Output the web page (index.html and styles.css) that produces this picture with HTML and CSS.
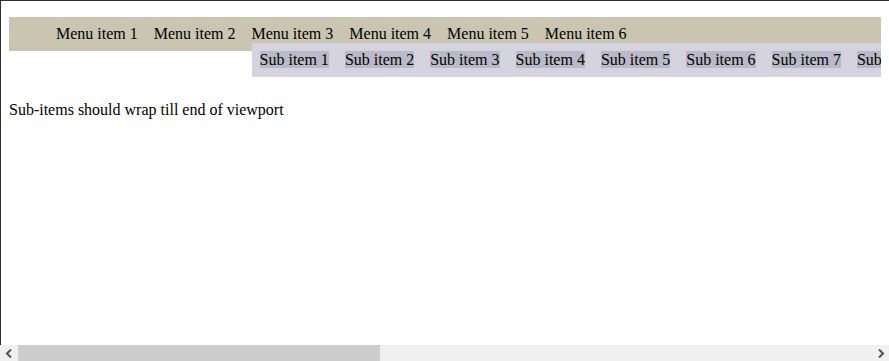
FILE: index.html
```html
<!DOCTYPE html>
<html>
<head>
<meta charset="utf-8">
<link rel="stylesheet" href="styles.css">
</head>
<body>
<ul class="menu">
  <li class="menu-item">Menu item 1</li>
  <li class="menu-item">Menu item 2</li>
  <li class="menu-item">Menu item 3
    <ul class="submenu">
      <li class="sub-item"><span class="sub-label">Sub item 1</span></li>
      <li class="sub-item"><span class="sub-label">Sub item 2</span></li>
      <li class="sub-item"><span class="sub-label">Sub item 3</span></li>
      <li class="sub-item"><span class="sub-label">Sub item 4</span></li>
      <li class="sub-item"><span class="sub-label">Sub item 5</span></li>
      <li class="sub-item"><span class="sub-label">Sub item 6</span></li>
      <li class="sub-item"><span class="sub-label">Sub item 7</span></li>
      <li class="sub-item"><span class="sub-label">Sub item 8</span></li>
      <li class="sub-item"><span class="sub-label">Sub item 9</span></li>
      <li class="sub-item"><span class="sub-label">Sub item 10</span></li>
      <li class="sub-item"><span class="sub-label">Sub item 11</span></li>
      <li class="sub-item"><span class="sub-label">Sub item 12</span></li>
      <li class="sub-item"><span class="sub-label">Sub item 13</span></li>
      <li class="sub-item"><span class="sub-label">Sub item 14</span></li>
      <li class="sub-item"><span class="sub-label">Sub item 15</span></li>
      <li class="sub-item"><span class="sub-label">Sub item 16</span></li>
      <li class="sub-item"><span class="sub-label">Sub item 17</span></li>
      <li class="sub-item"><span class="sub-label">Sub item 18</span></li>
      <li class="sub-item"><span class="sub-label">Sub item 19</span></li>
      <li class="sub-item"><span class="sub-label">Sub item 20</span></li>
    </ul>
  </li>
  <li class="menu-item">Menu item 4</li>
  <li class="menu-item">Menu item 5</li>
  <li class="menu-item">Menu item 6</li>
</ul>
<p class="note">Sub-items should wrap till end of viewport</p>

<div class="scrollbar">
  <div class="sb-btn">
    <svg width="8" height="9" viewBox="0 0 8 9"><path d="M6 0.5 L2 4.5 L6 8.5" fill="none" stroke="#505050" stroke-width="2"/></svg>
  </div>
  <div class="sb-track"><div class="sb-thumb"></div></div>
  <div class="sb-btn">
    <svg width="8" height="9" viewBox="0 0 8 9"><path d="M2 0.5 L6 4.5 L2 8.5" fill="none" stroke="#505050" stroke-width="2"/></svg>
  </div>
</div>
</body>
</html>
```
FILE: styles.css
```css
html {
  height: 361px;
  box-sizing: border-box;
  border-top: 1px solid #2e2e2e;
  border-left: 1px solid #2e2e2e;
  overflow: hidden;
  background: #fff;
}
body {
  margin: 0 8px;
  padding-top: 0;
  font-family: "Liberation Serif", "Times New Roman", serif;
  font-size: 16px;
  color: #000;
}
.menu {
  display: flex;
  list-style: none;
  margin: 16px 0 50px;
  padding: 8px 0 8px 39px;
  background: #c9c5b0;
}
.menu-item {
  position: relative;
  margin: 0 8px;
  white-space: nowrap;
}
.submenu {
  position: absolute;
  top: 100%;
  left: 0;
  display: flex;
  list-style: none;
  margin: 0;
  padding: 8px 0;
  background: #d4d3df;
  white-space: nowrap;
}
.sub-item {
  padding: 0 8px;
}
.sub-label {
  background: #b9b9c7;
}
.note {
  margin: 16px 0;
}
.scrollbar {
  position: fixed;
  left: 0;
  right: 0;
  bottom: 0;
  height: 16px;
  display: flex;
  background: #f0f0f0;
}
.sb-btn {
  width: 17px;
  display: flex;
  align-items: center;
  justify-content: center;
}
.sb-track {
  flex: 1;
  display: flex;
}
.sb-thumb {
  width: 362px;
  margin-left: 1px;
  background: #cdcdcd;
}
```
